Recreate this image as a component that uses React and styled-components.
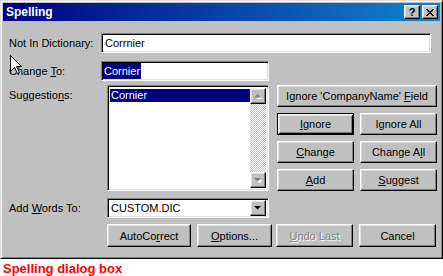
import React from "react";
import styled, { createGlobalStyle, css } from "styled-components";

const GlobalStyle = createGlobalStyle`
  body {
    margin: 0;
    background: #fff;
    font-family: "Liberation Sans", Arial, sans-serif;
    font-size: 11px;
    color: #000;
  }
`;

const raised = css`
  background: #c0c0c0;
  border: 1px solid;
  border-color: #fff #000 #000 #fff;
  box-shadow: inset -1px -1px #808080, inset 1px 1px #dfdfdf;
  box-sizing: border-box;
`;

const sunken = css`
  background: #fff;
  border: 1px solid;
  border-color: #808080 #fff #fff #808080;
  box-shadow: inset 1px 1px #000, inset -1px -1px #dfdfdf;
  box-sizing: border-box;
`;

const Window = styled.div`
  position: relative;
  width: 443px;
  height: 259px;
  box-sizing: border-box;
  background: #c0c0c0;
  border: 1px solid;
  border-color: #dfdfdf #000 #000 #dfdfdf;
  box-shadow: inset 1px 1px #fff, inset -1px -1px #808080;
  padding: 2px;
  display: flex;
  flex-direction: column;
`;

const TitleBar = styled.div`
  height: 18px;
  background: linear-gradient(to right, #000080, #1084d0);
  display: flex;
  align-items: center;
  justify-content: space-between;
  padding: 0 2px 0 3px;
`;

const TitleText = styled.span`
  color: #fff;
  font-weight: bold;
  font-size: 12px;
`;

const TitleButtons = styled.div`
  display: flex;
  gap: 2px;
`;

const TitleButton = styled.div`
  ${raised};
  width: 16px;
  height: 14px;
  display: flex;
  align-items: center;
  justify-content: center;
  font-weight: bold;
  font-size: 11px;
  line-height: 1;
`;

const Body = styled.div`
  display: flex;
  flex-direction: column;
  padding: 12px 0 0 6px;
`;

const Row = styled.div`
  display: flex;
  align-items: ${(p) => p.$align || "center"};
  margin-bottom: ${(p) => p.$gap || 0}px;
`;

const Label = styled.div`
  width: ${(p) => p.$w}px;
  flex-shrink: 0;
  padding-top: ${(p) => p.$top || 0}px;
`;

const U = styled.span`
  text-decoration: underline;
`;

const TextBox = styled.div`
  ${sunken};
  width: ${(p) => p.$w}px;
  height: 20px;
  padding: 0 ${(p) => p.$pad || 2}px;
  display: flex;
  align-items: center;
  white-space: nowrap;
`;

const Selected = styled.span`
  background: #000080;
  color: #fff;
  padding: 1px 1px;
  line-height: 14px;
`;

const ListBox = styled.div`
  ${sunken};
  width: 162px;
  height: 106px;
  padding: 2px;
  display: flex;
`;

const Items = styled.div`
  flex: 1;
`;

const Item = styled.div`
  height: 13px;
  line-height: 13px;
  padding-left: 1px;
  background: ${(p) => (p.$selected ? "#000080" : "transparent")};
  color: ${(p) => (p.$selected ? "#fff" : "#000")};
  margin-top: 1px;
`;

const ScrollBar = styled.div`
  width: 16px;
  display: flex;
  flex-direction: column;
`;

const Track = styled.div`
  flex: 1;
  background-color: #fff;
  background-image: conic-gradient(#c0c0c0 25%, #fff 0 50%, #c0c0c0 0 75%, #fff 0);
  background-size: 2px 2px;
`;

const ArrowButton = styled.div`
  ${raised};
  width: 16px;
  height: ${(p) => p.$h || 16}px;
  display: flex;
  align-items: center;
  justify-content: center;
`;

const Combo = styled(TextBox)`
  justify-content: space-between;
  padding: 2px 2px 2px 3px;
`;

const ButtonColumn = styled.div`
  display: flex;
  flex-direction: column;
  gap: 6px;
  margin-left: 8px;
  width: 160px;
`;

const ButtonPair = styled.div`
  display: flex;
  justify-content: space-between;
`;

const Button = styled.div`
  ${raised};
  width: ${(p) => p.$w}px;
  height: ${(p) => p.$h || 22}px;
  margin-right: ${(p) => p.$mr || 0}px;
  display: flex;
  align-items: center;
  justify-content: center;
  white-space: pre;
  color: ${(p) => (p.$disabled ? "#808080" : "#000")};
  text-shadow: ${(p) => (p.$disabled ? "1px 1px #fff" : "none")};
  ${(p) =>
    p.$default &&
    css`
      border-color: #000;
      box-shadow: inset 1px 1px #fff, inset -1px -1px #000, inset 2px 2px #dfdfdf,
        inset -2px -2px #808080;
    `}
`;

const Cursor = styled.svg`
  position: absolute;
  left: 9px;
  top: 54px;
`;

const Caption = styled.div`
  color: #f00;
  font-weight: bold;
  font-size: 13px;
  line-height: 15px;
  padding-left: 3px;
  margin-top: 2px;
`;

const Tri = ({ up, color = "#000", shadow }) => (
  <svg width="8" height="5" viewBox="0 0 8 5">
    {shadow && (
      <polygon
        points={up ? "4.5,1 8,4.5 1,4.5" : "1,1 8,1 4.5,4.5"}
        fill="#fff"
        transform="translate(1 1)"
      />
    )}
    <polygon points={up ? "3.5,0 7,3.5 0,3.5" : "0,0 7,0 3.5,3.5"} fill={color} />
  </svg>
);

export default function App() {
  return (
    <>
      <GlobalStyle />
      <Window>
        <TitleBar>
          <TitleText>Spelling</TitleText>
          <TitleButtons>
            <TitleButton>?</TitleButton>
            <TitleButton>
              <svg width="8" height="7" viewBox="0 0 8 7">
                <path d="M0 0h2v1h1v1h2V1h1V0h2v1H7v1H6v1H5v1h1v1h1v1h1v1H6V6H5V5H3v1H2v1H0V6h1V5h1V4h1V3H2V2H1V1H0z" fill="#000" />
              </svg>
            </TitleButton>
          </TitleButtons>
        </TitleBar>
        <Body>
          <Row $gap={8}>
            <Label $w={92}>Not In Dictionary:</Label>
            <TextBox $w={330} $pad={3}>Corrnier</TextBox>
          </Row>
          <Row $gap={4}>
            <Label $w={92}>
              Change <U>T</U>o:
            </Label>
            <TextBox $w={168} $pad={1}>
              <Selected>Cornier</Selected>
            </TextBox>
          </Row>
          <Row $align="flex-start" $gap={7}>
            <Label $w={98} $top={4}>
              Suggestio<U>n</U>s:
            </Label>
            <ListBox>
              <Items>
                <Item $selected>Cornier</Item>
              </Items>
              <ScrollBar>
                <ArrowButton>
                  <Tri up color="#808080" shadow />
                </ArrowButton>
                <Track />
                <ArrowButton>
                  <Tri color="#808080" shadow />
                </ArrowButton>
              </ScrollBar>
            </ListBox>
            <ButtonColumn>
              <Button $w={160}>
                {"Ignore 'CompanyName' "}
                <U>F</U>ield
              </Button>
              <ButtonPair>
                <Button $w={77} $default>
                  <U>I</U>gnore
                </Button>
                <Button $w={77}>
                  I<U>g</U>nore All
                </Button>
              </ButtonPair>
              <ButtonPair>
                <Button $w={77}>
                  <U>C</U>hange
                </Button>
                <Button $w={77}>
                  Change A<U>l</U>l
                </Button>
              </ButtonPair>
              <ButtonPair>
                <Button $w={77}>
                  <U>A</U>dd
                </Button>
                <Button $w={77}>
                  <U>S</U>uggest
                </Button>
              </ButtonPair>
            </ButtonColumn>
          </Row>
          <Row $gap={6}>
            <Label $w={98}>
              Add <U>W</U>ords To:
            </Label>
            <Combo $w={162}>
              <span>CUSTOM.DIC</span>
              <ArrowButton $h={16}>
                <Tri />
              </ArrowButton>
            </Combo>
          </Row>
          <Row>
            <Label $w={98} />
            <Button $w={84} $h={23} $mr={6}>
              AutoCo<U>r</U>rect
            </Button>
            <Button $w={75} $h={23} $mr={4}>
              <U>O</U>ptions...
            </Button>
            <Button $w={77} $h={23} $mr={6} $disabled>
              <U>U</U>ndo Last
            </Button>
            <Button $w={77} $h={23}>
              Cancel
            </Button>
          </Row>
        </Body>
        <Cursor width="12" height="19" viewBox="0 0 12 19">
          <path d="M0.5 0.5 V16.5 L4.5 12.5 L7.5 18.5 L9.5 17.5 L6.5 11.5 H11.5 Z" fill="#fff" stroke="#000" strokeWidth="1" />
        </Cursor>
      </Window>
      <Caption>Spelling dialog box</Caption>
    </>
  );
}
